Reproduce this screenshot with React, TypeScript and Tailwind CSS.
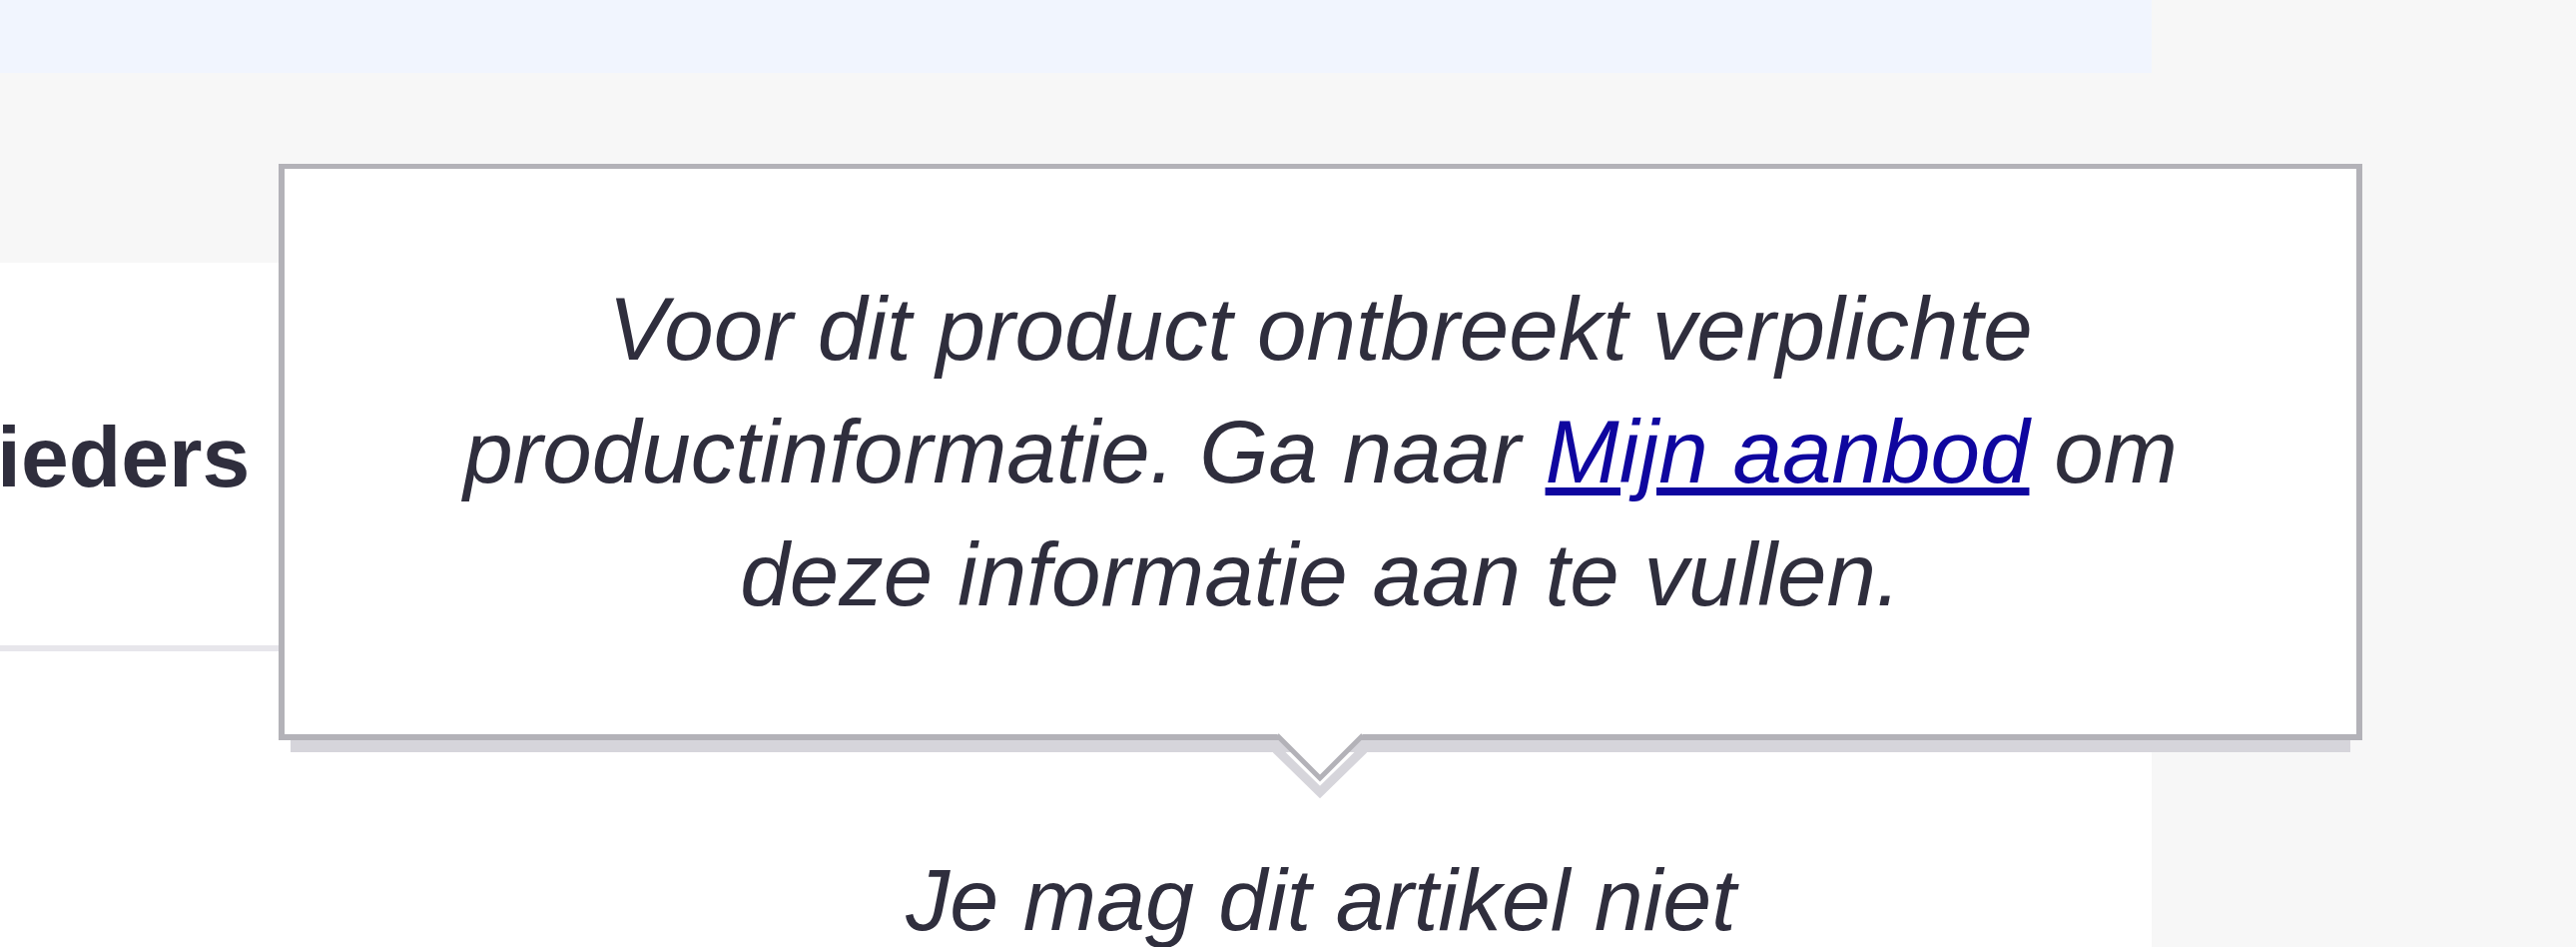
export default function App() {
  return (
    <div
      className="relative flex h-[948px] w-[2580px] overflow-hidden bg-[#f7f7f7] text-[#2f2e3d]"
      style={{ fontFamily: '"Liberation Sans", Arial, sans-serif' }}
    >
      <div className="flex h-full w-[2155px] shrink-0 flex-col">
        <div className="h-[73px] shrink-0 bg-[#f1f5fe]" />
        <div className="h-[190px] shrink-0 bg-[#f7f7f7]" />
        <div className="min-h-0 flex-1 overflow-hidden bg-white">
          <div className="h-[383px]">
            <div className="ml-[-3px] pt-[151px] text-[86px] font-bold leading-none">ieders</div>
          </div>
          <div className="h-[6px] bg-[#e7e6eb]" />
          <div className="flex">
            <div className="w-[491px] shrink-0" />
            <div className="flex-1 pt-[187px] text-center text-[88px] italic leading-[123px]">
              Je mag dit artikel niet
            </div>
          </div>
        </div>
      </div>
      <div className="flex-1 bg-[#f7f7f7]" />

      {/* tooltip */}
      <div className="absolute left-[279px] top-[164px] w-[2087px] border-[6px] border-t-[5px] border-[#b3b2b8] bg-white pb-[98px] pt-[99px] text-center text-[89px] italic leading-[123px] shadow-[0_24px_0_-12px_#d6d5db]">
        Voor dit product ontbreekt verplichte
        <br />
        productinformatie. Ga naar{" "}
        <a href="#" className="text-[#0f069f] underline">
          Mijn aanbod
        </a>{" "}
        om
        <br />
        deze informatie aan te vullen.
        <svg
          className="absolute left-[977px] top-[559px]"
          width="120"
          height="80"
          viewBox="1262 728 120 80"
        >
          <polyline
            points="1278,750 1322,793 1366,750"
            fill="none"
            stroke="#d6d5db"
            strokeWidth="9"
          />
          <polygon points="1277,733 1367,733 1322,778" fill="#ffffff" />
          <polyline
            points="1279,736 1322,779 1365,736"
            fill="none"
            stroke="#b3b2b8"
            strokeWidth="5"
          />
        </svg>
      </div>
    </div>
  );
}
